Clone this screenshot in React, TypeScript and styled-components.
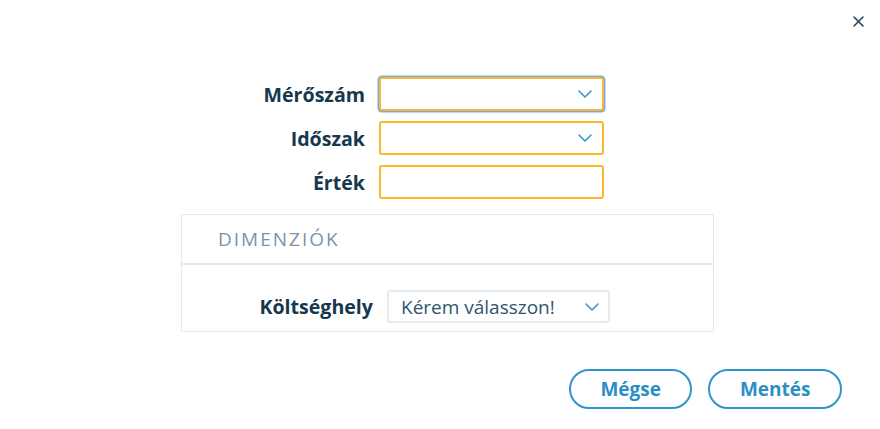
import React from 'react';
import styled, { createGlobalStyle } from 'styled-components';

const GlobalStyle = createGlobalStyle`
  html, body {
    margin: 0;
    padding: 0;
    background: #ffffff;
  }
  body {
    font-family: 'Open Sans', 'Noto Sans', sans-serif;
  }
`;

const Dialog = styled.div`
  position: relative;
  width: 880px;
  height: 429px;
  box-sizing: border-box;
  padding: 77px 0 0 0;
  background: #ffffff;
`;

const CloseButton = styled.button`
  position: absolute;
  top: 13px;
  right: 14px;
  width: 16px;
  height: 16px;
  padding: 0;
  border: none;
  background: transparent;
  display: flex;
  align-items: center;
  justify-content: center;
  cursor: pointer;
`;

const Form = styled.div`
  display: grid;
  grid-template-columns: 186px 225px;
  column-gap: 14px;
  row-gap: 10px;
  margin-left: 179px;
`;

const Label = styled.label`
  justify-self: end;
  align-self: center;
  font-size: 19.6px;
  font-weight: 700;
  color: #15384f;
`;

const Field = styled.div<{ $focused?: boolean }>`
  position: relative;
  height: 34px;
  box-sizing: border-box;
  border: 2px solid #fbb62a;
  border-radius: 3px;
  background: #fff;
  box-shadow: ${({ $focused }) => ($focused ? '0 0 0 1.5px #7aa7ee' : 'none')};
  display: flex;
  align-items: center;
  justify-content: flex-end;
  padding-right: 10px;
`;

const Panel = styled.section`
  width: 533px;
  margin: 15px 0 0 181px;
  border: 1px solid #e6eaef;
  box-sizing: border-box;
`;

const PanelHeader = styled.div`
  height: 50px;
  box-sizing: border-box;
  border-bottom: 2px solid #e4e9ee;
  display: flex;
  align-items: center;
  padding-left: 36px;
  font-size: 19px;
  letter-spacing: 2px;
  color: #7d93ab;
`;

const PanelBody = styled.div`
  display: grid;
  grid-template-columns: 191px 223px;
  column-gap: 14px;
  padding: 25px 0 8px 0;
`;

const Select = styled.div`
  height: 33px;
  box-sizing: border-box;
  border: 2px solid #e6ebf0;
  border-radius: 3px;
  display: flex;
  align-items: center;
  justify-content: space-between;
  padding: 0 9px 0 12px;
  font-size: 19px;
  color: #2c5672;
`;

const Actions = styled.div`
  display: flex;
  justify-content: flex-end;
  gap: 16px;
  margin: 37px 38px 0 0;
`;

const PillButton = styled.button`
  height: 40px;
  padding: 0 29.5px;
  border: 2px solid #2e95cc;
  border-radius: 20px;
  background: #fff;
  color: #2b8fc6;
  font-family: 'Open Sans', 'Noto Sans', sans-serif;
  font-size: 19px;
  font-weight: 700;
  cursor: pointer;
`;

const Chevron = () => (
  <svg width="14" height="8" viewBox="0 0 14 8" fill="none">
    <path d="M1 1l6 6 6-6" stroke="#3596cf" strokeWidth="1.6" strokeLinecap="round" strokeLinejoin="round" />
  </svg>
);

export default function App() {
  return (
    <>
      <GlobalStyle />
      <Dialog>
        <CloseButton aria-label="Bezárás">
          <svg width="11" height="11" viewBox="0 0 11 11">
            <path d="M1 1l9 9M10 1l-9 9" stroke="#1b3f5a" strokeWidth="1.5" strokeLinecap="round" />
          </svg>
        </CloseButton>
        <Form>
          <Label>Mérőszám</Label>
          <Field $focused>
            <Chevron />
          </Field>
          <Label>Időszak</Label>
          <Field>
            <Chevron />
          </Field>
          <Label>Érték</Label>
          <Field />
        </Form>
        <Panel>
          <PanelHeader>DIMENZIÓK</PanelHeader>
          <PanelBody>
            <Label>Költséghely</Label>
            <Select>
              <span>Kérem válasszon!</span>
              <Chevron />
            </Select>
          </PanelBody>
        </Panel>
        <Actions>
          <PillButton>Mégse</PillButton>
          <PillButton>Mentés</PillButton>
        </Actions>
      </Dialog>
    </>
  );
}
